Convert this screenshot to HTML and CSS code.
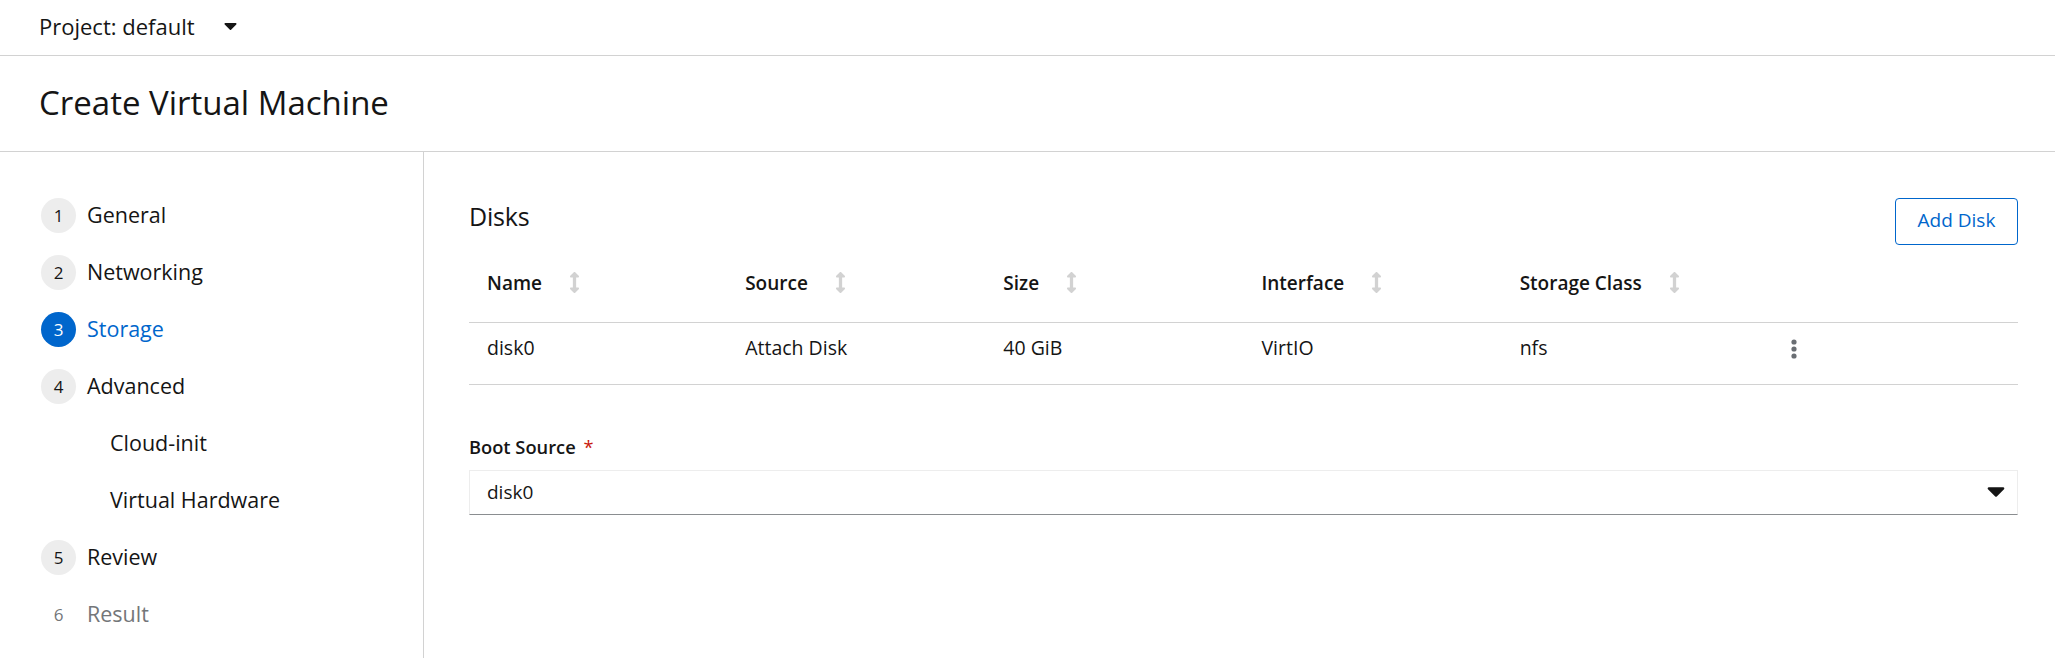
FILE: index.html
```html
<!DOCTYPE html>
<html lang="en">
<head>
<meta charset="utf-8">
<title>Create Virtual Machine</title>
<link rel="stylesheet" href="styles.css">
</head>
<body>
<header class="topbar">
  <span class="project">Project: default</span>
  <svg class="caret-sm" viewBox="0 0 320 170" aria-hidden="true"><path d="M31.3 0h257.3c17.8 0 26.7 21.5 14.1 34.1L174.1 162.8c-7.8 7.8-20.5 7.8-28.3 0L17.2 34.1C4.6 21.5 13.5 0 31.3 0z"/></svg>
</header>
<div class="titlebar">
  <h1 class="title">Create Virtual Machine</h1>
</div>
<div class="wizard">
  <nav class="wiz-nav">
    <ol class="steps">
      <li class="step"><span class="num">1</span><span class="label">General</span></li>
      <li class="step"><span class="num">2</span><span class="label">Networking</span></li>
      <li class="step active"><span class="num">3</span><span class="label">Storage</span></li>
      <li class="step"><span class="num">4</span><span class="label">Advanced</span></li>
      <li class="step sub"><span class="label">Cloud-init</span></li>
      <li class="step sub"><span class="label">Virtual Hardware</span></li>
      <li class="step"><span class="num">5</span><span class="label">Review</span></li>
      <li class="step disabled"><span class="num">6</span><span class="label">Result</span></li>
    </ol>
  </nav>
  <main class="wiz-main">
    <div class="section-head">
      <h2 class="section-title">Disks</h2>
      <button class="btn-secondary" type="button">Add Disk</button>
    </div>
    <table class="disk-table">
      <thead>
        <tr>
          <th><span class="th-inner">Name<svg class="sort" viewBox="0 0 256 512"><path d="M214.059 377.941H168V134.059h46.059c21.382 0 32.090-25.851 16.971-40.971L144.971 7.029c-9.373-9.373-24.568-9.373-33.941 0L24.971 93.088c-15.119 15.119-4.411 40.971 16.971 40.971H88v243.882H41.941c-21.382 0-32.090 25.851-16.971 40.971l86.059 86.059c9.373 9.373 24.568 9.373 33.941 0l86.059-86.059c15.120-15.119 4.412-40.971-16.970-40.971z"/></svg></span></th>
          <th><span class="th-inner">Source<svg class="sort" viewBox="0 0 256 512"><path d="M214.059 377.941H168V134.059h46.059c21.382 0 32.090-25.851 16.971-40.971L144.971 7.029c-9.373-9.373-24.568-9.373-33.941 0L24.971 93.088c-15.119 15.119-4.411 40.971 16.971 40.971H88v243.882H41.941c-21.382 0-32.090 25.851-16.971 40.971l86.059 86.059c9.373 9.373 24.568 9.373 33.941 0l86.059-86.059c15.120-15.119 4.412-40.971-16.970-40.971z"/></svg></span></th>
          <th><span class="th-inner">Size<svg class="sort" viewBox="0 0 256 512"><path d="M214.059 377.941H168V134.059h46.059c21.382 0 32.090-25.851 16.971-40.971L144.971 7.029c-9.373-9.373-24.568-9.373-33.941 0L24.971 93.088c-15.119 15.119-4.411 40.971 16.971 40.971H88v243.882H41.941c-21.382 0-32.090 25.851-16.971 40.971l86.059 86.059c9.373 9.373 24.568 9.373 33.941 0l86.059-86.059c15.120-15.119 4.412-40.971-16.970-40.971z"/></svg></span></th>
          <th><span class="th-inner">Interface<svg class="sort" viewBox="0 0 256 512"><path d="M214.059 377.941H168V134.059h46.059c21.382 0 32.090-25.851 16.971-40.971L144.971 7.029c-9.373-9.373-24.568-9.373-33.941 0L24.971 93.088c-15.119 15.119-4.411 40.971 16.971 40.971H88v243.882H41.941c-21.382 0-32.090 25.851-16.971 40.971l86.059 86.059c9.373 9.373 24.568 9.373 33.941 0l86.059-86.059c15.120-15.119 4.412-40.971-16.970-40.971z"/></svg></span></th>
          <th><span class="th-inner">Storage Class<svg class="sort" viewBox="0 0 256 512"><path d="M214.059 377.941H168V134.059h46.059c21.382 0 32.090-25.851 16.971-40.971L144.971 7.029c-9.373-9.373-24.568-9.373-33.941 0L24.971 93.088c-15.119 15.119-4.411 40.971 16.971 40.971H88v243.882H41.941c-21.382 0-32.090 25.851-16.971 40.971l86.059 86.059c9.373 9.373 24.568 9.373 33.941 0l86.059-86.059c15.120-15.119 4.412-40.971-16.970-40.971z"/></svg></span></th>
          <th></th>
        </tr>
      </thead>
      <tbody>
        <tr>
          <td>disk0</td>
          <td>Attach Disk</td>
          <td>40 GiB</td>
          <td>VirtIO</td>
          <td>nfs</td>
          <td><span class="kebab"><svg viewBox="0 0 6 20"><circle cx="3" cy="3" r="2.6"/><circle cx="3" cy="10" r="2.6"/><circle cx="3" cy="17" r="2.6"/></svg></span></td>
        </tr>
      </tbody>
    </table>
    <div class="form-group">
      <label class="form-label">Boot Source <span class="req">*</span></label>
      <div class="select">
        <span class="select-value">disk0</span>
        <svg class="caret-lg" viewBox="0 0 320 170" aria-hidden="true"><path d="M31.3 0h257.3c17.8 0 26.7 21.5 14.1 34.1L174.1 162.8c-7.8 7.8-20.5 7.8-28.3 0L17.2 34.1C4.6 21.5 13.5 0 31.3 0z"/></svg>
      </div>
    </div>
  </main>
</div>
</body>
</html>
```

FILE: styles.css
```css
* { box-sizing: border-box; }
html, body { margin: 0; padding: 0; }
body {
  font-family: "Open Sans", "Liberation Sans", sans-serif;
  color: #151515;
  background: #fff;
  height: 658px;
  overflow: hidden;
}

.topbar {
  height: 56px;
  border-bottom: 1px solid #d2d2d2;
  display: flex;
  align-items: center;
  padding: 0 0 3px 39px;
}
.project { font-size: 22px; }
.caret-sm { width: 13px; height: 7px; margin-left: 29px; fill: #151515; }

.titlebar {
  height: 96px;
  border-bottom: 1px solid #d2d2d2;
  display: flex;
  align-items: center;
  padding: 0 0 3px 39px;
}
.title { margin: 0; font-size: 33px; font-weight: 400; }

.wizard { display: flex; height: 506px; }

.wiz-nav {
  width: 424px;
  border-right: 1px solid #d2d2d2;
  padding-top: 35px;
}
.steps { list-style: none; margin: 0; padding: 0; }
.step {
  height: 57px;
  display: flex;
  align-items: center;
  padding-left: 41px;
  font-size: 21.5px;
}
.label { padding-bottom: 2px; }
.num {
  width: 35px;
  height: 35px;
  border-radius: 50%;
  background: #ededed;
  display: flex;
  align-items: center;
  justify-content: center;
  font-size: 17px;
  margin-right: 11px;
}
.step.active { color: #06c; }
.step.active .num { background: #06c; color: #fff; }
.step.sub { padding-left: 110px; }
.step.disabled { color: #737679; }
.step.disabled .num { background: transparent; }

.wiz-main {
  flex: 1;
  padding: 46px 37px 0 45px;
}
.section-head {
  height: 46px;
  display: flex;
  align-items: center;
  justify-content: space-between;
}
.section-title { margin: 0 0 10px; font-size: 25px; font-weight: 400; letter-spacing: -0.2px; }
.btn-secondary {
  font-family: inherit;
  width: 123px;
  height: 47px;
  font-size: 19px;
  color: #06c;
  background: #fff;
  border: 1px solid #06c;
  border-radius: 4px;
  padding: 0 0 2px;
}

.disk-table {
  width: 100%;
  border-collapse: collapse;
  table-layout: fixed;
  font-size: 19.5px;
}
.disk-table th {
  height: 78px;
  text-align: left;
  font-weight: 600;
  font-size: 19px;
  padding: 0 0 0 18px;
  border-bottom: 1px solid #d2d2d2;
  vertical-align: middle;
}
.th-inner { display: inline-flex; align-items: center; }
.sort { width: 11px; height: 21px; fill: #d2d2d2; margin-left: 27px; }
.disk-table td {
  height: 62px;
  padding: 0 0 11px 18px;
  border-bottom: 1px solid #d2d2d2;
  vertical-align: middle;
}
.kebab { display: inline-flex; padding-left: 13px; padding-top: 9px; }
.kebab svg { width: 6px; height: 20px; fill: #6a6e73; }

.form-group { margin-top: 48px; }
.form-label {
  display: block;
  font-size: 18.3px;
  font-weight: 600;
  line-height: 27px;
  margin-bottom: 10px;
}
.req { color: #c9190b; font-weight: 400; margin-left: 3px; }
.select {
  height: 45px;
  border: 1px solid #ededed;
  border-bottom-color: #8a8d90;
  display: flex;
  align-items: center;
  justify-content: space-between;
  padding: 0 12px 0 17px;
  font-size: 19px;
}
.caret-lg { width: 18px; height: 10px; fill: #151515; }
```
